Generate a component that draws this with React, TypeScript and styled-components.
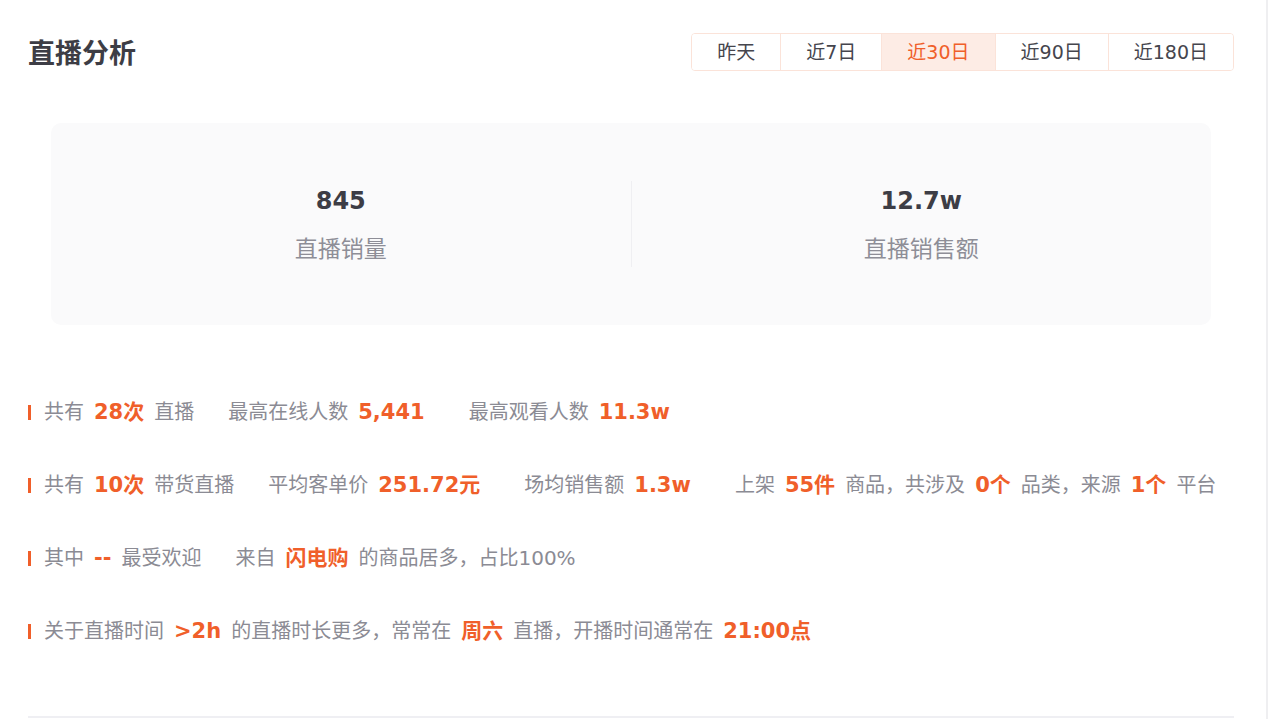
import React, { useState } from 'react';
import styled, { createGlobalStyle } from 'styled-components';

const GlobalStyle = createGlobalStyle`
  html, body {
    margin: 0;
    padding: 0;
    background: #ffffff;
  }
  body {
    font-family: "DejaVu Sans", "Noto Sans CJK SC", sans-serif;
    -webkit-font-smoothing: antialiased;
  }
`;

const Page = styled.div`
  width: 1268px;
  height: 719px;
  box-sizing: border-box;
  border-right: 2px solid #efeff1;
  padding: 33px 32px 0 28px;
  overflow: hidden;
`;

const Header = styled.div`
  display: flex;
  align-items: center;
  justify-content: space-between;
  height: 38px;
`;

const Title = styled.h1`
  margin: 0;
  font-family: "Noto Sans CJK SC", sans-serif;
  font-size: 27px;
  line-height: 38px;
  font-weight: 700;
  color: #3d3d45;
`;

const Tabs = styled.div`
  display: flex;
  height: 38px;
  box-sizing: border-box;
  border: 1px solid #fbe3d9;
  border-radius: 4px;
  overflow: hidden;
`;

const Tab = styled.button<{ active: boolean }>`
  border: none;
  border-left: 1px solid #fbe3d9;
  &:first-child {
    border-left: none;
  }
  padding: 0 25px;
  margin: 0;
  font-family: "DejaVu Sans", "Noto Sans CJK SC", sans-serif;
  font-size: 19px;
  line-height: 36px;
  background: ${({ active }) => (active ? '#fdece5' : '#ffffff')};
  color: ${({ active }) => (active ? '#f05f2a' : '#45454d')};
  cursor: pointer;
`;

const StatCard = styled.div`
  margin: 52px 23px 0;
  height: 202px;
  background: #fafafb;
  border-radius: 10px;
  display: flex;
  align-items: center;
`;

const StatItem = styled.div`
  flex: 1;
  display: flex;
  flex-direction: column;
  align-items: center;
  gap: 16px;
`;

const StatDivider = styled.div`
  width: 1px;
  height: 86px;
  background: #efeff2;
`;

const StatValue = styled.div`
  font-family: "DejaVu Sans", sans-serif;
  font-weight: 700;
  font-size: 24px;
  line-height: 30px;
  color: #3d3d45;
`;

const StatLabel = styled.div`
  font-family: "Noto Sans CJK SC", sans-serif;
  font-size: 23px;
  line-height: 30px;
  color: #8e8e97;
`;

const Insights = styled.div`
  margin-top: 72px;
  display: flex;
  flex-direction: column;
  gap: 43px;
`;

const Row = styled.div`
  display: flex;
  align-items: center;
  height: 30px;
  gap: 34px;
`;

const Marker = styled.span`
  width: 3px;
  height: 15px;
  background: #f05f2a;
  margin-right: -21px;
`;

const Group = styled.span`
  display: flex;
  align-items: center;
  white-space: nowrap;
`;

const Plain = styled.span`
  font-family: "DejaVu Sans", "Noto Sans CJK SC", sans-serif;
  font-size: 20px;
  line-height: 30px;
  color: #8b8b94;
`;

const Hl = styled.span`
  font-family: "DejaVu Sans", "Noto Sans CJK SC", sans-serif;
  font-weight: 700;
  font-size: 21px;
  line-height: 30px;
  color: #f05f2a;
  margin: 0 10px;
`;

type Part = { t: string; hl?: boolean };

const rows: Part[][][] = [
  [
    [{ t: '共有' }, { t: '28次', hl: true }, { t: '直播' }],
    [{ t: '最高在线人数' }, { t: '5,441', hl: true }],
    [{ t: '最高观看人数' }, { t: '11.3w', hl: true }],
  ],
  [
    [{ t: '共有' }, { t: '10次', hl: true }, { t: '带货直播' }],
    [{ t: '平均客单价' }, { t: '251.72元', hl: true }],
    [{ t: '场均销售额' }, { t: '1.3w', hl: true }],
    [
      { t: '上架' },
      { t: '55件', hl: true },
      { t: '商品，共涉及' },
      { t: '0个', hl: true },
      { t: '品类，来源' },
      { t: '1个', hl: true },
      { t: '平台' },
    ],
  ],
  [
    [{ t: '其中' }, { t: '--', hl: true }, { t: '最受欢迎' }],
    [{ t: '来自' }, { t: '闪电购', hl: true }, { t: '的商品居多，占比100%' }],
  ],
  [
    [
      { t: '关于直播时间' },
      { t: '>2h', hl: true },
      { t: '的直播时长更多，常常在' },
      { t: '周六', hl: true },
      { t: '直播，开播时间通常在' },
      { t: '21:00点', hl: true },
    ],
  ],
];

const BottomLine = styled.div`
  margin-top: 70px;
  height: 2px;
  background: #efeff3;
`;

const ranges = ['昨天', '近7日', '近30日', '近90日', '近180日'];

const App: React.FC = () => {
  const [range, setRange] = useState('近30日');

  return (
    <>
      <GlobalStyle />
      <Page>
        <Header>
          <Title>直播分析</Title>
          <Tabs>
            {ranges.map((r) => (
              <Tab key={r} active={r === range} onClick={() => setRange(r)}>
                {r}
              </Tab>
            ))}
          </Tabs>
        </Header>

        <StatCard>
          <StatItem>
            <StatValue>845</StatValue>
            <StatLabel>直播销量</StatLabel>
          </StatItem>
          <StatDivider />
          <StatItem>
            <StatValue>12.7w</StatValue>
            <StatLabel>直播销售额</StatLabel>
          </StatItem>
        </StatCard>

        <Insights>
          {rows.map((groups, i) => (
            <Row key={i}>
              <Marker />
              {groups.map((parts, j) => (
                <Group key={j}>
                  {parts.map((p, k) =>
                    p.hl ? <Hl key={k}>{p.t}</Hl> : <Plain key={k}>{p.t}</Plain>
                  )}
                </Group>
              ))}
            </Row>
          ))}
        </Insights>

        <BottomLine />
      </Page>
    </>
  );
};

export default App;
